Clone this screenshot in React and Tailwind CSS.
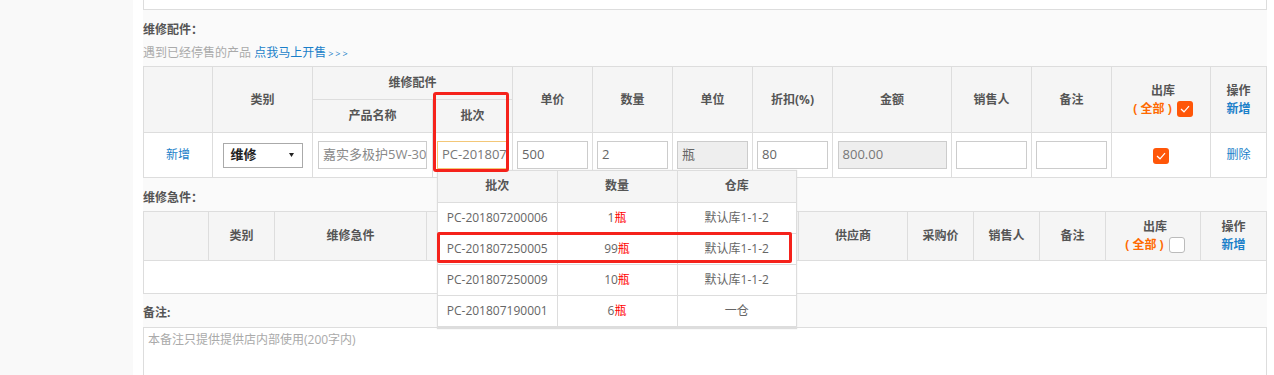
import React from 'react';

const font = { fontFamily: '"Open Sans", "Noto Sans CJK SC", sans-serif' };

function Check({ on = true }) {
    if (!on) {
        return <span className="inline-block w-4 h-4 rounded-[3px] border border-[#bbb] bg-white align-middle"></span>;
    }
    return (
        <span className="inline-flex items-center justify-center w-4 h-4 rounded-[3px] bg-[#ff5608] align-middle">
            <svg width="10" height="8" viewBox="0 0 10 8" fill="none">
                <path d="M1 4 L4 6.8 L9 1.2" stroke="white" strokeWidth="1.2" />
            </svg>
        </span>
    );
}

function OutHeader({ on }) {
    return (
        <div className="flex flex-col items-center leading-[18px] pl-[4px]">
            <span>出库</span>
            <span className="flex items-center gap-[5px]">
                <span className="text-[#ff6a00]">(&nbsp;全部&nbsp;)</span>
                <Check on={on} />
            </span>
        </div>
    );
}

function OpHeader() {
    return (
        <div className="flex flex-col items-center leading-[18px]">
            <span>操作</span>
            <span className="text-[#1a7fc9]">新增</span>
        </div>
    );
}

const th = 'border border-[#ddd] bg-[#f5f5f5] text-[12px] font-bold text-[#555] text-center align-middle p-0';
const td = 'border border-[#ddd] bg-white text-[12px] text-[#666] text-center align-middle p-0';
const input = 'w-[71px] h-[28px] border border-[#ccc] bg-white text-[13px] text-[#666] pl-[4px] text-left flex items-center mx-auto';

const batches = [
    ['PC-201807200006', '1', '默认库1-1-2'],
    ['PC-201807250005', '99', '默认库1-1-2'],
    ['PC-201807250009', '10', '默认库1-1-2'],
    ['PC-201807190001', '6', '一仓'],
];

export default function App() {
    return (
        <div className="flex w-[1274px] h-[375px] overflow-hidden bg-white" style={font}>
            {/* Sidebar */}
            <div className="w-[133px] shrink-0 bg-[#f9f9f9]"></div>
            <div className="w-[10px] shrink-0 bg-white"></div>

            {/* Main */}
            <div className="relative w-[1124px] shrink-0 bg-[#fafafa]">
                <div className="h-[10px] bg-white border-x border-b border-[#ddd]"></div>

                <div className="mt-[12px] h-[16px] leading-[16px] text-[12px] font-bold text-[#555]">维修配件：</div>
                <div className="mt-[7px] h-[16px] leading-[16px] text-[12px] text-[#aaa]">
                    遇到已经停售的产品 <span className="text-[#1a7fc9]">点我马上开售</span>
                    <span className="text-[#1a7fc9] text-[9px] tracking-[2px] ml-[2px]">&gt;&gt;&gt;</span>
                </div>

                {/* Table 1 */}
                <table className="mt-[5px] w-[1123px] table-fixed border-collapse">
                    <colgroup>
                        <col className="w-[69px]" />
                        <col className="w-[100px]" />
                        <col className="w-[120px]" />
                        <col className="w-[80px]" />
                        <col className="w-[80px]" />
                        <col className="w-[80px]" />
                        <col className="w-[80px]" />
                        <col className="w-[80px]" />
                        <col className="w-[119px]" />
                        <col className="w-[80px]" />
                        <col className="w-[80px]" />
                        <col className="w-[99px]" />
                        <col className="w-[56px]" />
                    </colgroup>
                    <thead>
                        <tr className="h-[33px]">
                            <th rowSpan={2} className={th}></th>
                            <th rowSpan={2} className={th}>类别</th>
                            <th colSpan={2} className={th}>维修配件</th>
                            <th rowSpan={2} className={th}>单价</th>
                            <th rowSpan={2} className={th}>数量</th>
                            <th rowSpan={2} className={th}>单位</th>
                            <th rowSpan={2} className={th}>折扣(%)</th>
                            <th rowSpan={2} className={th}>金额</th>
                            <th rowSpan={2} className={th}>销售人</th>
                            <th rowSpan={2} className={th}>备注</th>
                            <th rowSpan={2} className={th}><OutHeader on /></th>
                            <th rowSpan={2} className={th}><OpHeader /></th>
                        </tr>
                        <tr className="h-[33px]">
                            <th className={th}>产品名称</th>
                            <th className={th}>批次</th>
                        </tr>
                    </thead>
                    <tbody>
                        <tr className="h-[45px]">
                            <td className={td}><span className="text-[#1a7fc9]">新增</span></td>
                            <td className={td}>
                                <div className="w-[80px] h-[25px] mx-auto border border-[#aaa] bg-white flex items-center justify-between pl-[7px] pr-[8px] text-[13px] font-bold text-[#222]">
                                    <span>维修</span>
                                    <svg width="5" height="4" viewBox="0 0 5 4">
                                        <path d="M0 0 H5 L2.5 4 Z" fill="#222" />
                                    </svg>
                                </div>
                            </td>
                            <td className={td}>
                                <div className="w-[109px] h-[28px] ml-[5px] border border-[#ccc] bg-white flex items-center pl-[4px] text-[13px] text-[#888] whitespace-nowrap overflow-hidden">嘉实多极护5W-30</div>
                            </td>
                            <td className={td}>
                                <div className="w-[70px] h-[28px] ml-[4px] border border-[#f3c778] bg-white flex items-center pl-[4px] text-[13px] text-[#777] whitespace-nowrap overflow-hidden">PC-201807250005</div>
                            </td>
                            <td className={td}><div className={input}>500</div></td>
                            <td className={td}><div className={input}>2</div></td>
                            <td className={td}><div className={input} style={{ backgroundColor: '#eeeeee' }}>瓶</div></td>
                            <td className={td}><div className={input}>80</div></td>
                            <td className={td}>
                                <div className="w-[109px] h-[28px] mx-auto border border-[#ccc] bg-[#eee] flex items-center pl-[4px] text-[13px] text-[#777]">800.00</div>
                            </td>
                            <td className={td}><div className={input}></div></td>
                            <td className={td}><div className={input}></div></td>
                            <td className={td}><Check /></td>
                            <td className={td}><span className="text-[#1a7fc9]">删除</span></td>
                        </tr>
                    </tbody>
                </table>

                <div className="mt-[12px] h-[16px] leading-[16px] text-[12px] font-bold text-[#555]">维修急件：</div>

                {/* Table 2 */}
                <table className="mt-[5px] w-[1123px] table-fixed border-collapse">
                    <colgroup>
                        <col className="w-[65px]" />
                        <col className="w-[66px]" />
                        <col className="w-[152px]" />
                        <col className="w-[124px]" />
                        <col className="w-[124px]" />
                        <col className="w-[124px]" />
                        <col className="w-[109px]" />
                        <col className="w-[66px]" />
                        <col className="w-[66px]" />
                        <col className="w-[66px]" />
                        <col className="w-[95px]" />
                        <col className="w-[66px]" />
                    </colgroup>
                    <thead>
                        <tr className="h-[49px]">
                            <th className={th}></th>
                            <th className={th}>类别</th>
                            <th className={th}>维修急件</th>
                            <th className={th}>单价</th>
                            <th className={th}>数量</th>
                            <th className={th}>单位</th>
                            <th className={th}>供应商</th>
                            <th className={th}>采购价</th>
                            <th className={th}>销售人</th>
                            <th className={th}>备注</th>
                            <th className={th}><OutHeader on={false} /></th>
                            <th className={th}><OpHeader /></th>
                        </tr>
                    </thead>
                    <tbody>
                        <tr className="h-[33px]">
                            <td colSpan={12} className={td}></td>
                        </tr>
                    </tbody>
                </table>

                <div className="mt-[11px] h-[16px] leading-[16px] text-[12px] font-bold text-[#555]">备注:</div>
                <div className="mt-[6px] h-[60px] border border-[#ddd] bg-white px-[4px] pt-[3px] text-[12px] text-[#aaa]">
                    本备注只提供提供店内部使用(200字内)
                </div>

                {/* Batch dropdown */}
                <div className="absolute left-[294px] top-[170px] w-[358px] bg-white border border-[#ddd] shadow-[1px_1px_1px_1px_#ddd]">
                    <table className="w-full table-fixed border-collapse">
                        <colgroup>
                            <col className="w-[119px]" />
                            <col className="w-[120px]" />
                            <col className="w-[119px]" />
                        </colgroup>
                        <thead>
                            <tr className="h-[31px]">
                                <th className={`${th} border-t-0 border-l-0`}>批次</th>
                                <th className={`${th} border-t-0`}>数量</th>
                                <th className={`${th} border-t-0 border-r-0`}>仓库</th>
                            </tr>
                        </thead>
                        <tbody>
                            {batches.map(([no, qty, wh], i) => (
                                <tr key={no} className="h-[31px]">
                                    <td className={`${td} border-l-0 ${i === batches.length - 1 ? 'border-b-0' : ''}`}>{no}</td>
                                    <td className={`${td} ${i === batches.length - 1 ? 'border-b-0' : ''}`}>
                                        {qty}<span className="text-[#f00]">瓶</span>
                                    </td>
                                    <td className={`${td} border-r-0 ${i === batches.length - 1 ? 'border-b-0' : ''}`}>{wh}</td>
                                </tr>
                            ))}
                        </tbody>
                    </table>
                </div>

                {/* Highlight boxes */}
                <div className="absolute left-[290px] top-[92px] w-[76px] h-[80px] border-[3px] border-[#f5221b] rounded-[3px]"></div>
                <div className="absolute left-[294px] top-[232px] w-[355px] h-[31px] border-[3px] border-[#f5221b] rounded-[2px]"></div>
            </div>
        </div>
    );
}
